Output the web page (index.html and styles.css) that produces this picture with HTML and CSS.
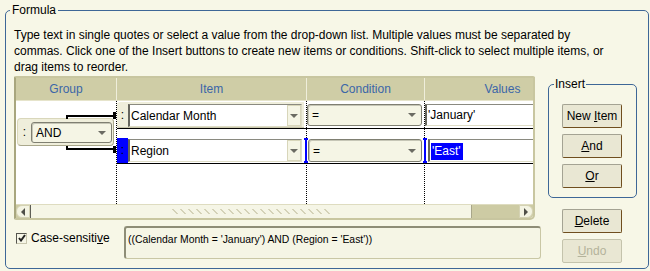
FILE: index.html
```html
<!DOCTYPE html>
<html lang="en">

<head>
    <meta charset="UTF-8">
    <meta name="viewport" content="width=device-width, initial-scale=1.0">
    <title>Formula</title>
    <link rel="stylesheet" href="styles.css">
</head>

<body>
    <fieldset class="formula">
        <legend>Formula</legend>
        <p class="hint">Type text in single quotes or select a value from the drop-down list. Multiple values must be separated by<br>commas. Click one of the Insert buttons to create new items or conditions. Shift-click to select multiple items, or<br>drag items to reorder.</p>
        <div class="main">
            <div class="left">
                <div class="grid">
                    <div class="grid-head">
                        <div>Group</div>
                        <div>Item</div>
                        <div>Condition</div>
                        <div>Values</div>
                    </div>
                    <div class="grid-body">
                        <div class="group-cell">
                            <svg class="bracket" width="101" height="62" viewBox="0 0 101 62">
                                <path d="M51 17V14H98" fill="none" stroke="#000" stroke-width="2" />
                                <rect x="97" y="10" width="3" height="7" />
                                <path d="M51 44V47H98" fill="none" stroke="#000" stroke-width="2" />
                                <rect x="97" y="44" width="3" height="7" />
                            </svg>
                            <div class="group-box">
                                <span class="handle">:</span>
                                <div class="select"><span class="text">AND</span><i class="arrow"></i></div>
                            </div>
                        </div>
                        <div class="row row-1">
                            <div class="cell cell-item">
                                <div class="item-combo">
                                    <span class="handle">:</span>
                                    <div class="field"><span class="text">Calendar Month</span><span class="dd"><i class="arrow"></i></span></div>
                                </div>
                            </div>
                            <div class="cell cell-cond">
                                <div class="select"><span class="text">=</span><i class="arrow"></i></div>
                            </div>
                            <div class="cell cell-val">
                                <div class="field"><span class="text">'January'</span></div>
                            </div>
                        </div>
                        <div class="row row-2">
                            <div class="cell cell-item">
                                <div class="item-combo">
                                    <span class="handle">:</span>
                                    <div class="field"><span class="text">Region</span><span class="dd"><i class="arrow"></i></span></div>
                                </div>
                            </div>
                            <div class="cell cell-cond">
                                <div class="select"><span class="text">=</span><i class="arrow"></i></div>
                            </div>
                            <div class="cell cell-val">
                                <div class="field"><span class="text"><span class="hl">'East'</span></span></div>
                            </div>
                        </div>
                    </div>
                    <div class="hscroll">
                        <span class="sb-btn sb-left"></span>
                        <span class="sb-thumb"><span class="grip"></span></span>
                        <span class="sb-track"></span>
                        <span class="sb-btn sb-right"></span>
                    </div>
                </div>
                <div class="bottom">
                    <label class="check">
                        <span class="box">
                            <svg width="8" height="8" viewBox="0 0 8 8"><path d="M1 4L3 6.5L7 1" fill="none" stroke="#222" stroke-width="2" /></svg>
                        </span>
                        <span class="label">Case-sensiti<u>v</u>e</span>
                    </label>
                    <div class="expr">((Calendar Month = 'January') AND (Region = 'East'))</div>
                </div>
            </div>
            <div class="right">
                <fieldset class="insert">
                    <legend>Insert</legend>
                    <button class="btn">New <u>I</u>tem</button>
                    <button class="btn"><u>A</u>nd</button>
                    <button class="btn"><u>O</u>r</button>
                </fieldset>
                <button class="btn btn-delete"><u>D</u>elete</button>
                <button class="btn btn-undo" disabled><u>U</u>ndo</button>
            </div>
        </div>
    </fieldset>
</body>

</html>
```

FILE: styles.css
```css
* {
    box-sizing: border-box;
}

body {
    margin: 0;
    background: #f7f7e7;
    font: 12px "Liberation Sans", Arial, sans-serif;
    color: #000;
}

.formula {
    margin: 3px 0 0 5px;
    width: 644px;
    height: 266px;
    min-width: 0;
    border: 1px solid #3e6797;
    border-radius: 5px;
    padding: 10px 10px 0 8px;
}

.formula>legend {
    margin-left: -4px;
    padding: 0 2px;
    line-height: 14px;
}

.hint {
    margin: 0;
    line-height: 16px;
    white-space: nowrap;
}

.main {
    display: flex;
    margin-top: 1px;
}

.left {
    width: 527px;
}

/* grid */

.grid {
    width: 521px;
    height: 144px;
    border: 2px solid #c8c6a0;
    border-left-color: #a8a67e;
    border-radius: 2px 2px 5px 2px;
    overflow: hidden;
    background: #fff;
}

.grid-head {
    display: grid;
    grid-template-columns: 101px 190px 118px 156px;
    height: 23px;
    background: #cfcda6;
    border-bottom: 1px solid #e6e4cb;
}

.grid-head>div {
    line-height: 22px;
    text-align: center;
    color: #3b66a8;
    border-right: 1px solid #efeedb;
}

.grid-body {
    display: grid;
    grid-template-columns: 101px 190px 118px 156px;
    grid-template-rows: 1px 27px 9px 26px 1fr;
    height: 103px;
    overflow: hidden;
    background:
        linear-gradient(#000 50%, transparent 50%) 100px 0 / 1px 2px repeat-y,
        linear-gradient(#000 50%, transparent 50%) 290px 0 / 1px 2px repeat-y,
        linear-gradient(#000 50%, transparent 50%) 408px 0 / 1px 2px repeat-y,
        #fff;
}

.group-cell {
    grid-column: 1;
    grid-row: 2 / 5;
    position: relative;
    padding: 16px 0 0 1px;
}

.bracket {
    position: absolute;
    left: 0;
    top: 0;
}

.group-box {
    display: flex;
    width: 97px;
    height: 28px;
    padding: 3px 1px 2px 0;
    background: #efeedb;
    border: 1px solid #d9d7bb;
    border-right-color: #a9a78b;
    border-bottom-color: #a9a78b;
    border-radius: 4px;
}

.handle {
    flex: none;
    width: 13px;
    text-align: center;
    line-height: 20px;
}

.row {
    grid-column: 2 / -1;
    display: flex;
    border-bottom: 1px solid #000;
}

.row-1 {
    grid-row: 2;
}

.row-2 {
    grid-row: 4;
}

.cell {
    flex: none;
    position: relative;
}

.cell-item {
    width: 190px;
}

.cell-cond {
    width: 118px;
}

.cell-val {
    width: 156px;
}

.item-combo {
    display: flex;
    width: 187px;
    height: 26px;
    padding: 2px 2px 1px 0;
    background: #efeedb;
    border-radius: 3px 0 0 3px;
    box-shadow: inset 0 -1px 0 #c9c7ab;
}

.item-combo .handle {
    width: 11px;
    line-height: 22px;
}

.field {
    flex: 1;
    display: flex;
    align-items: center;
    background: #fff;
    border: 1px solid #dedcc6;
    border-left: 2px solid #66665e;
    border-top-color: #8a8a80;
    overflow: hidden;
    white-space: nowrap;
}

.field .text {
    flex: 1;
    padding-left: 1px;
}

.dd {
    flex: none;
    width: 14px;
    height: 100%;
    display: flex;
    align-items: center;
    justify-content: center;
    background: #f5f5e5;
    border: 1px solid #d8d6ba;
}

.arrow {
    display: block;
    width: 0;
    height: 0;
    border-left: 4px solid transparent;
    border-right: 4px solid transparent;
    border-top: 4px solid #6b6b63;
}

.select {
    flex: 1;
    display: flex;
    align-items: center;
    padding: 0 5px 0 4px;
    background: #f5f5e5;
    border: 1px solid #7f7f72;
    border-radius: 3px;
    box-shadow: inset 1px 1px 0 #c6c6b6;
}

.select .text {
    flex: 1;
}

.cell-cond .select {
    width: 115px;
    height: 22px;
    margin-top: 2px;
}

.cell-val .field {
    width: 160px;
    height: 22px;
    margin-top: 2px;
}

.row-2 .item-combo {
    height: 25px;
    padding: 1px 2px 1px 0;
    background: transparent;
    box-shadow: none;
}

.row-2 .item-combo .handle {
    margin: -1px 0;
    background: #0000ff;
    line-height: 25px;
}

.row-2 .cell-cond .select {
    width: 114px;
    height: 23px;
    margin: 1px 0 0 1px;
}

.row-2 .cell-val .field {
    height: 23px;
    margin: 1px 0 0 3px;
}

.row-2 .cell-cond::before,
.row-2 .cell-val::before {
    content: '';
    position: absolute;
    top: 0;
    left: -3px;
    width: 4px;
    height: 25px;
    background:
        linear-gradient(#00f, #00f) center / 2px 100% no-repeat,
        linear-gradient(#00f, #00f) top / 4px 2px no-repeat,
        linear-gradient(#00f, #00f) bottom / 4px 2px no-repeat;
}

.row-2 .cell-val::before {
    left: -2px;
}

.hl {
    padding: 1px 2px 2px 1px;
    background: #0000ff;
    color: #fff;
}

/* scrollbar */

.hscroll {
    display: flex;
    height: 14px;
    background: #cdcba4;
    border-top: 1px solid #dedcc0;
}

.sb-btn {
    flex: none;
    width: 14px;
    display: flex;
    align-items: center;
    justify-content: center;
    background: #f3f3e2;
    border: 1px solid #d4d2b4;
}

.sb-left {
    border-radius: 6px 0 0 6px;
}

.sb-right {
    border-radius: 0 6px 6px 0;
}

.sb-left::after,
.sb-right::after {
    content: '';
    border-top: 4px solid transparent;
    border-bottom: 4px solid transparent;
}

.sb-left::after {
    border-right: 4px solid #4f4f48;
}

.sb-right::after {
    border-left: 4px solid #4f4f48;
}

.sb-thumb {
    flex: none;
    width: 442px;
    display: flex;
    align-items: center;
    justify-content: center;
    background: #f5f5e6;
    border-left: 1px solid #5e5e56;
    border-right: 1px solid #a8a68a;
}

.grip {
    width: 160px;
    height: 5px;
    background:
        linear-gradient(45deg, transparent 40%, #d4d2b8 40% 60%, transparent 60%) 0 0 / 8px 5px repeat-x;
}

.sb-track {
    flex: 1;
}

/* bottom */

.bottom {
    display: flex;
    margin-top: 6px;
}

.check {
    display: flex;
    align-items: center;
    width: 108px;
    height: 14px;
    margin: 5px 0 0 2px;
    gap: 4px;
}

.check .box {
    flex: none;
    width: 11px;
    height: 11px;
    display: flex;
    align-items: center;
    justify-content: center;
    background: #f5f5e6;
    border: 1px solid #55554e;
    border-right-color: #c8c6ae;
    border-bottom-color: #c8c6ae;
}

.check .label {
    white-space: nowrap;
}

.expr {
    width: 417px;
    height: 33px;
    padding: 6px 2px;
    font-size: 10.4px;
    line-height: 12px;
    background: #f5f5e5;
    border: 1px solid #c9c7a5;
    border-top: 2px solid #8e8d77;
    border-left: 2px solid #8e8d77;
    border-radius: 3px;
}

/* right panel */

.right {
    width: 89px;
    margin-left: 7px;
}

.insert {
    margin: 1px 0 0;
    min-width: 0;
    padding: 13px 0 9px 13px;
    border: 1px solid #3e6797;
    border-radius: 5px;
}

.insert>legend {
    margin-left: -8px;
    padding: 0 1px;
    line-height: 14px;
}

.btn {
    display: block;
    width: 60px;
    height: 24px;
    margin: 0 0 6px;
    padding: 0;
    font: 12px "Liberation Sans", Arial, sans-serif;
    color: #000;
    background: #e9e7d3;
    border: 1px solid #6f4e1e;
    border-top-color: #a4a393;
    border-left-color: #a4a393;
    border-radius: 2px;
}

.insert .btn:last-child {
    margin-bottom: 0;
}

.btn-delete {
    margin: 11px 0 6px 14px;
}

.btn-undo {
    margin-left: 14px;
    color: #b4b39b;
    border-color: #c4c3ac;
}
```
